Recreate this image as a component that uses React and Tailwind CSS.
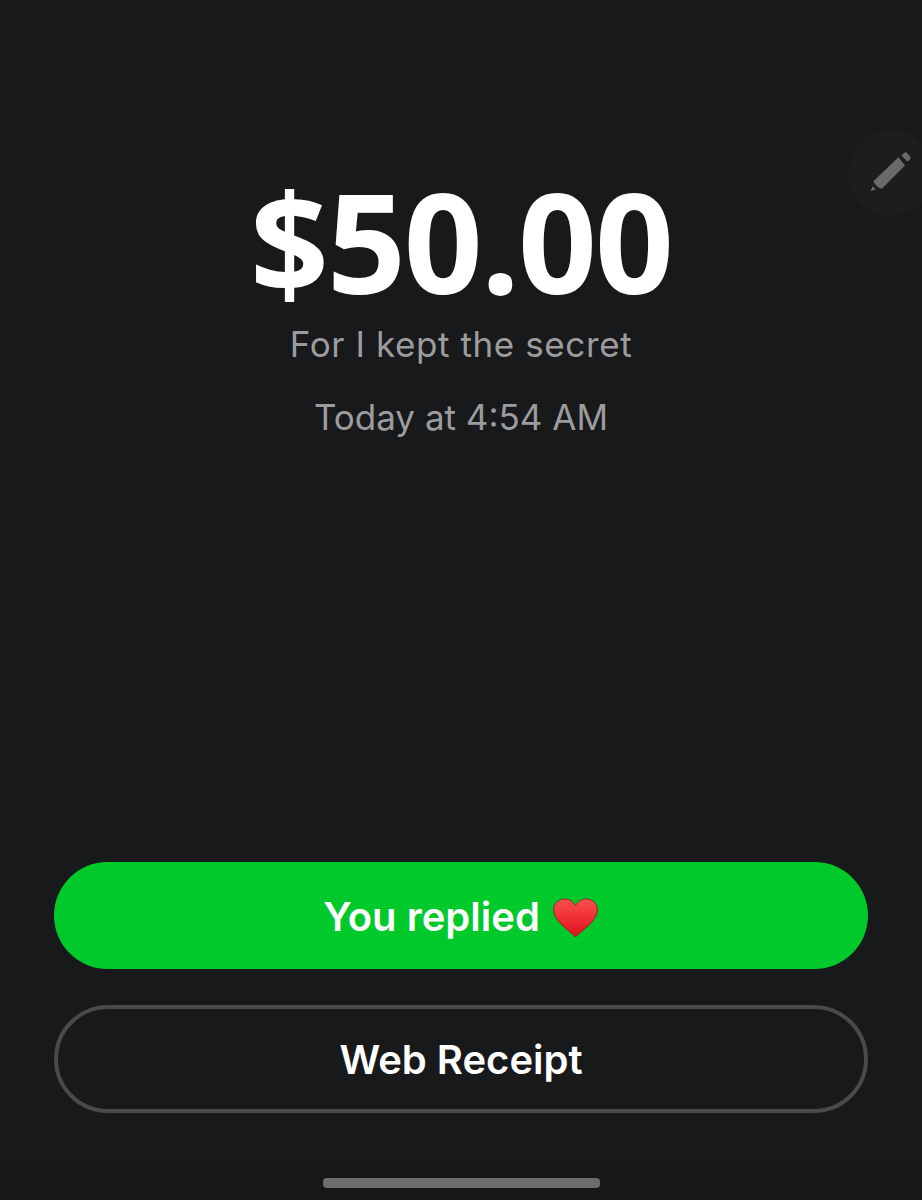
import React from "react";

function Pencil() {
  return (
    <svg width="44" height="44" viewBox="0 0 44 44" fill="none">
      <path d="M1.5 40 L3.6 35.2 L6.8 38.4 Z" fill="#6a6a6c" />
      <path d="M4.6 30 L29.5 6.2 L36 14.6 L12.8 37.8 C9.5 37.2 5.4 33.4 4.6 30 Z" fill="#6a6a6c" />
      <path d="M32.6 4.6 L35.4 1.8 C36.2 1 37.2 1 37.9 1.8 L41.2 5.8 C41.9 6.6 41.9 7.5 41.1 8.2 L38.4 10.8 Z" fill="#6a6a6c" />
    </svg>
  );
}

function Heart() {
  return (
    <svg width="47" height="40" viewBox="0 0 48 42" className="ml-3 mt-[2px]">
      <defs>
        <linearGradient id="heartFill" x1="0" y1="0" x2="0" y2="1">
          <stop offset="0" stopColor="#f9504f" />
          <stop offset="1" stopColor="#e3101c" />
        </linearGradient>
      </defs>
      <path
        d="M24 41 C19 35 1 25 1 12.5 C1 5.5 6.5 1 12.5 1 C17.5 1 21.5 3.5 24 8 C26.5 3.5 30.5 1 35.5 1 C41.5 1 47 5.5 47 12.5 C47 25 29 35 24 41 Z"
        fill="url(#heartFill)"
        stroke="#8a2a1e"
        strokeWidth="1"
      />
    </svg>
  );
}

export default function App() {
  return (
    <div className="relative h-[1200px] w-[922px] overflow-hidden bg-[#18191b] font-['Inter',sans-serif] flex flex-col items-center">
      {/* Edit button, runs off the right edge */}
      <div className="absolute left-[848px] top-[130px] w-[86px] h-[86px] rounded-full bg-[#1c1d1f] flex items-center justify-center">
        <Pencil />
      </div>

      <div className="mt-[175px] text-[138px] leading-[130px] font-[660] text-white tracking-[-2px] font-['Open_Sans',sans-serif]">$50.00</div>
      <div className="mt-[18px] text-[35px] leading-[42px] text-[#9c9c9e] tracking-[0.6px]">For I kept the secret</div>
      <div className="mt-[31px] text-[35px] leading-[42px] text-[#9c9c9e]">Today at 4:54 AM</div>

      <div className="mt-auto w-full px-[54px] flex flex-col gap-[36px]">
        <button className="h-[107px] pt-[2px] rounded-full bg-[#00c92c] flex items-center justify-center text-white text-[40px] font-semibold">
          You replied
          <Heart />
        </button>
        <button className="h-[108px] pt-[2px] rounded-full border-[4px] border-[#4a4a4c] flex items-center justify-center text-white text-[40px] font-semibold">
          Web Receipt
        </button>
      </div>

      <div className="mt-[54px] w-full h-[33px] bg-[#161719] flex justify-center pt-[11px]">
        <div className="w-[277px] h-[10px] rounded-[4px] bg-[#6c6c6e]"></div>
      </div>
    </div>
  );
}
